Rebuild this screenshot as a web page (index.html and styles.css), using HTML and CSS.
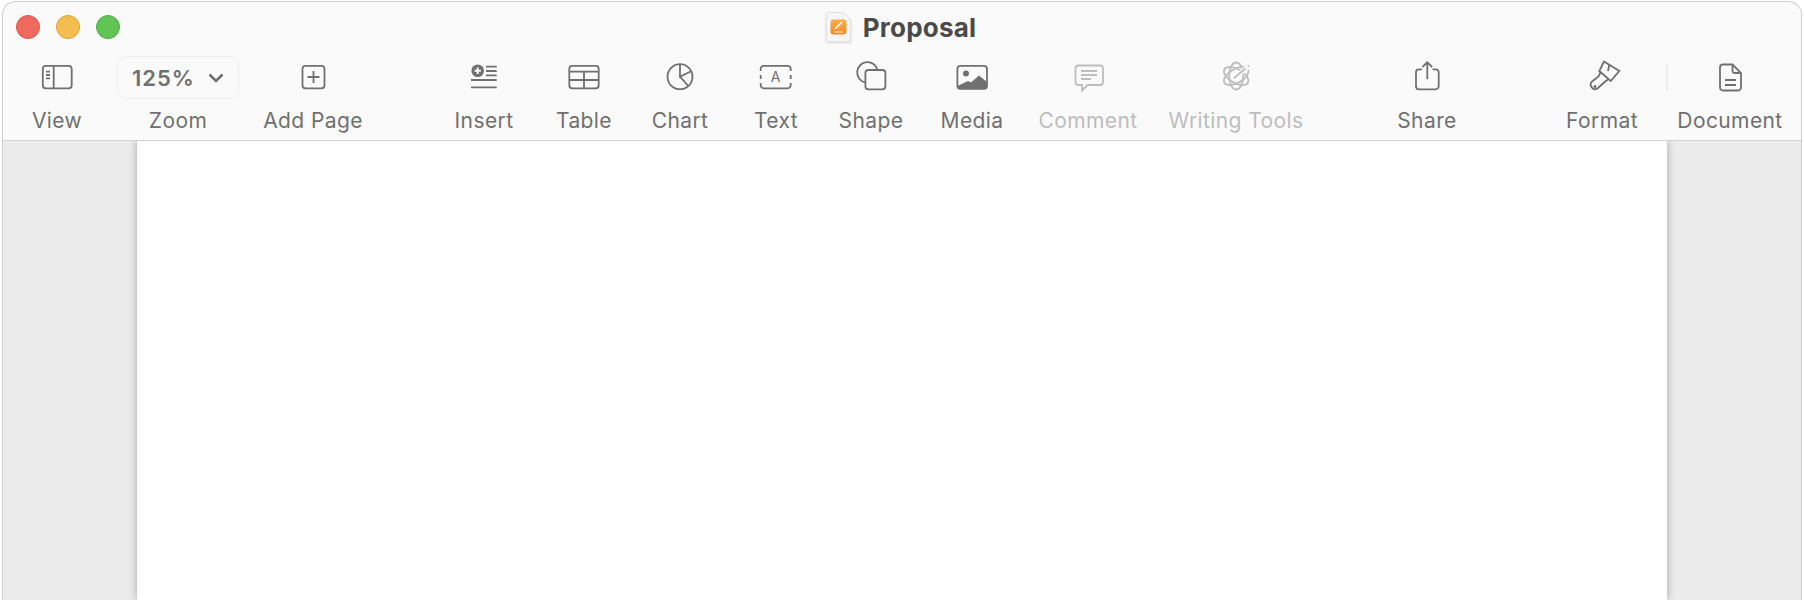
FILE: index.html
```html
<!DOCTYPE html>
<html lang="en">
<head>
  <meta charset="UTF-8">
  <title>Proposal</title>
  <link rel="stylesheet" href="styles.css">
</head>
<body>
  <div class="window">
    <div class="titlebar">
      <div class="lights">
        <span class="light light-close"></span>
        <span class="light light-min"></span>
        <span class="light light-max"></span>
      </div>
      <div class="doc-title">
        <svg class="doc-icon" viewBox="0 0 25 30" width="25" height="30">
          <defs>
            <linearGradient id="badge" x1="0" y1="0" x2="0" y2="1">
              <stop offset="0" stop-color="#f9b04a"/>
              <stop offset="1" stop-color="#ee8a24"/>
            </linearGradient>
          </defs>
          <path d="M1.500 0.500H17L24.500 8V28a1.500 1.500 0 0 1-1.500 1.500H1.500A1 1 0 0 1 .5 28.500V1.500a1 1 0 0 1 1-1Z" fill="#f6f6f6" stroke="#e2e2e2"/>
          <path d="M17 .5V8H24.500Z" fill="#fff" stroke="#e2e2e2"/>
          <rect x="4.500" y="7.500" width="16" height="15" rx="3" fill="url(#badge)"/>
          <path d="M9 17 16 10" stroke="#fff" stroke-width="1.600" fill="none"/>
          <path d="M8 20H17" stroke="#fde3bd" fill="none"/>
        </svg>
        <span>Proposal</span>
      </div>
    </div>

    <div class="toolbar">
      <div class="tool">
        <svg class="icon" viewBox="0 0 40 32"><rect x="5.800" y="4.800" width="28.900" height="22.500" rx="3"/><path d="M16.700 4.800V27.300M9 10.600h4M9 14h4M9 17.300h4"/></svg>
        <span class="label">View</span>
      </div>
      <div class="tool">
        <div class="zoom-box">
          <span>125%</span>
          <svg viewBox="0 0 16 10" width="16" height="10"><path d="M1.500 1.500 8 8 14.500 1.500" fill="none" stroke="currentColor" stroke-width="2.600"/></svg>
        </div>
        <span class="label">Zoom</span>
      </div>
      <div class="tool">
        <svg class="icon" viewBox="0 0 40 32"><rect x="9.500" y="4.800" width="22" height="22.500" rx="3"/><path d="M20.500 10v12M14.500 16h12"/></svg>
        <span class="label">Add Page</span>
      </div>
      <span></span>
      <div class="tool">
        <svg class="icon" viewBox="0 0 40 32"><circle class="solid" cx="13.700" cy="9.700" r="6.300"/><path class="cut" d="M13.700 6.500v6.400M10.500 9.700h6.400"/><path d="M22 5.700h10.700M22 10h10.700M22 14.300h10.700M7 19h25.700M7 26.300h25.700"/></svg>
        <span class="label">Insert</span>
      </div>
      <div class="tool">
        <svg class="icon" viewBox="0 0 40 32"><rect x="5.300" y="4.800" width="29.400" height="22.500" rx="3"/><path d="M5.300 10.700h29.400M5.300 19h29.400M20 10.700v16.600"/></svg>
        <span class="label">Table</span>
      </div>
      <div class="tool">
        <svg class="icon" viewBox="0 0 40 32"><circle cx="20" cy="15.700" r="12.500"/><path d="M20 3.400V15.700L31.500 10M20 15.700 28.300 25"/></svg>
        <span class="label">Chart</span>
      </div>
      <div class="tool">
        <svg class="icon" viewBox="0 0 40 32"><path d="M4.700 10V7.800a3 3 0 0 1 3-3H31.700a3 3 0 0 1 3 3V10M4.700 14v4M34.700 14v4M4.700 22v2.300a3 3 0 0 0 3 3H31.700a3 3 0 0 0 3-3V22"/><text class="icon-text" x="19.700" y="21" text-anchor="middle">A</text></svg>
        <span class="label">Text</span>
      </div>
      <div class="tool">
        <svg class="icon" viewBox="0 0 40 32"><rect x="14.400" y="9" width="20" height="19.300" rx="3"/><path d="M14.400 21.500A10.300 10.300 0 1 1 26.500 9"/></svg>
        <span class="label">Shape</span>
      </div>
      <div class="tool">
        <svg class="icon" viewBox="0 0 40 32"><rect x="5.400" y="4.800" width="29.600" height="23" rx="3"/><circle class="solid" cx="14" cy="12.500" r="3"/><path class="solid" d="M5.400 25 16 20 19 21.500 27 14.500 35 21V25a3 3 0 0 1-3 3H8.400a3 3 0 0 1-3-3Z"/></svg>
        <span class="label">Media</span>
      </div>
      <div class="tool tool-off">
        <svg class="icon" viewBox="0 0 40 32"><path d="M10.500 4.500H32a3 3 0 0 1 3 3V21a3 3 0 0 1-3 3H19.500L14 29.500V24H10.500a3 3 0 0 1-3-3V7.500a3 3 0 0 1 3-3Z"/><path d="M13 10h16M13 14h16M13 18h10"/></svg>
        <span class="label">Comment</span>
      </div>
      <div class="tool tool-off">
        <svg class="icon" viewBox="0 0 40 32"><ellipse cx="20.200" cy="15" rx="13.500" ry="7" transform="rotate(30 20.200 15)"/><ellipse cx="20.200" cy="15" rx="13.500" ry="7" transform="rotate(90 20.200 15)"/><ellipse cx="20.200" cy="15" rx="13.500" ry="7" transform="rotate(150 20.200 15)"/><path class="mask" d="M17 18 33 5"/><path d="M17.700 17.300 29.500 7.500M32 5.500l1-1"/></svg>
        <span class="label">Writing Tools</span>
      </div>
      <span></span>
      <div class="tool">
        <svg class="icon" viewBox="0 0 40 32"><path d="M15 8.300H12a3 3 0 0 0-3 3V25.300a3 3 0 0 0 3 3H28.700a3 3 0 0 0 3-3V11.300a3 3 0 0 0-3-3H25.500"/><path d="M20.300 18.300V1.500M15.500 6 20.300 1.200 25.100 6"/></svg>
        <span class="label">Share</span>
      </div>
      <span></span>
      <div class="tool">
        <svg class="icon" viewBox="0 0 40 32"><path d="M22 .5 37.300 10 28.700 20 17.300 10Z"/><path d="M27.300 4 26 10"/><path d="M18.500 11.500 16.500 15.500 10 20.500a4.500 4.500 0 0 0 5.500 7L22 21.500 26.500 18"/><circle class="solid" cx="13" cy="25.500" r="1.500"/></svg>
        <span class="label">Format</span>
      </div>
      <div class="divider"></div>
      <div class="tool">
        <svg class="icon" viewBox="0 0 40 32"><path d="M13 3.500H22.500L31 12V26.500a3 3 0 0 1-3 3H13a3 3 0 0 1-3-3V6.500a3 3 0 0 1 3-3Z"/><path d="M22.500 3.500V9.500a2.500 2.500 0 0 0 2.500 2.500H31M15 19H26M15 24H26"/></svg>
        <span class="label">Document</span>
      </div>
    </div>

    <div class="workspace">
      <div class="page"></div>
    </div>
  </div>
</body>
</html>
```

FILE: styles.css
```css
html, body {
  margin: 0;
  height: 600px;
  overflow: hidden;
  background-color: #fff;
}
body {
  padding: 1px 2px 0 2px;
  box-sizing: border-box;
  font-family: Inter, "Noto Sans", sans-serif;
}
.window {
  height: 599px;
  box-sizing: border-box;
  display: flex;
  flex-direction: column;
  background-color: #fafafa;
  border: 1px solid #cfcfcf;
  border-bottom: 0;
  border-radius: 14px 14px 0 0;
  overflow: hidden;
}
.titlebar {
  height: 54px;
  flex: none;
  box-sizing: border-box;
  display: grid;
  grid-template-columns: 1fr auto 1fr;
  align-items: center;
  padding: 0 2px 4px 0;
}
.lights {
  display: flex;
  gap: 16px;
  padding-left: 13px;
}
.light {
  width: 24px;
  height: 24px;
  border-radius: 50%;
  border: 1px solid;
  box-sizing: border-box;
}
.light-close {
  background-color: #ee6a5f;
  border-color: #d9574d;
}
.light-min {
  background-color: #f5bd4f;
  border-color: #dea03a;
}
.light-max {
  background-color: #61c454;
  border-color: #50ac44;
}
.doc-title {
  display: flex;
  align-items: center;
  gap: 12px;
  font-size: 26px;
  font-weight: 700;
  letter-spacing: 0.2px;
  color: #4a4a4a;
}
.doc-icon {
  overflow: visible;
  filter: drop-shadow(0 1px 1px rgba(0, 0, 0, 0.15));
}
.toolbar {
  height: 85px;
  flex: none;
  box-sizing: border-box;
  display: grid;
  grid-template-columns: 108px 134px 136px 53px 100px 100px 92px 100px 90px 112px 120px 176px 53px 100px 75px 100px 30px 96px;
  border-bottom: 1px solid #d4d4d4;
}
.tool {
  display: flex;
  flex-direction: column;
  align-items: center;
  color: #707070;
}
.tool-off {
  color: #bdbdbd;
}
.icon {
  width: 40px;
  height: 32px;
  margin-top: 5px;
  flex: none;
  fill: none;
  stroke: currentColor;
  stroke-width: 1.8;
  overflow: visible;
}
.icon .solid {
  fill: currentColor;
  stroke: none;
}
.icon .cut {
  stroke: #fafafa;
  stroke-width: 2;
}
.icon .mask {
  stroke: #fafafa;
  stroke-width: 5;
}
.icon-text {
  font-size: 14px;
  fill: currentColor;
  stroke: none;
}
.label {
  margin-top: 15px;
  font-size: 21px;
  letter-spacing: 0.4px;
  line-height: 26px;
  white-space: nowrap;
}
.zoom-box {
  width: 122px;
  height: 43px;
  margin: 0 0 -6px;
  flex: none;
  box-sizing: border-box;
  border: 1.5px solid #eeeeee;
  border-radius: 10px;
  display: flex;
  align-items: center;
  justify-content: center;
  gap: 13px;
  font-size: 22px;
  font-weight: 600;
  letter-spacing: 1px;
}
.divider {
  width: 2px;
  height: 28px;
  margin-top: 7px;
  justify-self: center;
  background-color: #ececec;
}
.workspace {
  flex: 1;
  background-color: #ebebeb;
  padding: 0 134px;
  overflow: hidden;
}
.page {
  height: 100%;
  background-color: #fff;
  box-shadow: 0 0 8px rgba(0, 0, 0, 0.3);
}
```
